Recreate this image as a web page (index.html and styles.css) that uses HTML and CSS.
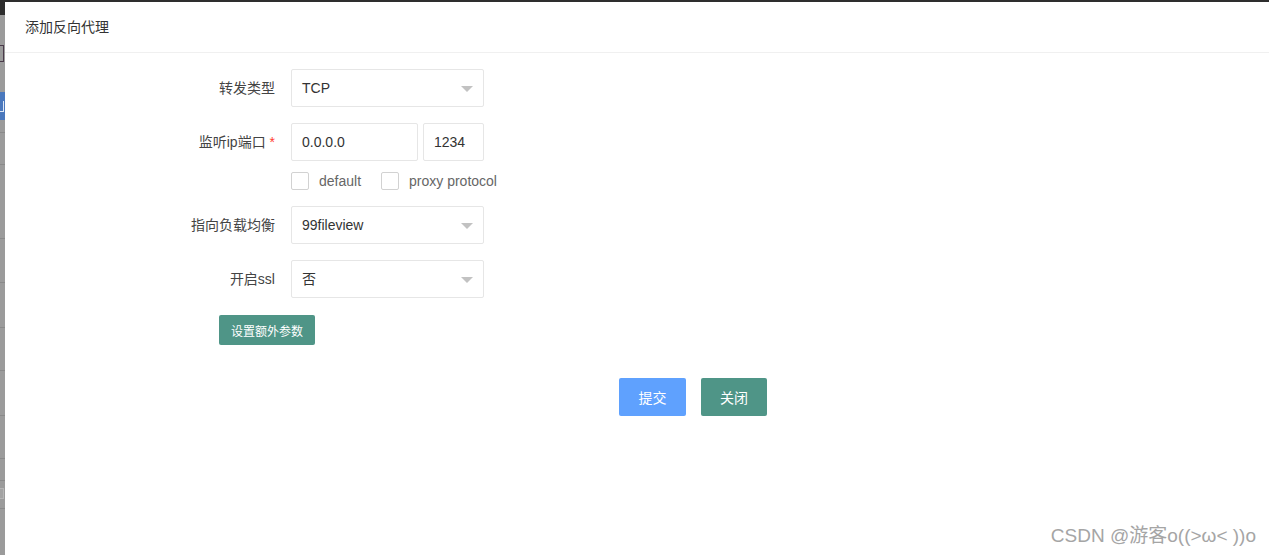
FILE: index.html
```html
<!DOCTYPE html>
<html lang="zh-CN">
<head>
<meta charset="utf-8">
<title>添加反向代理</title>
<link rel="stylesheet" href="styles.css">
</head>
<body>
<div class="topbar"></div>
<div class="main">
  <div class="backdrop">
    <div class="bd-dark"></div>
    <div class="bd-bracket"></div>
    <div class="bd-blue"></div>
    <div class="bd-line g12"></div>
    <div class="bd-line g31"></div>
    <div class="bd-line g73"></div>
    <div class="bd-line g43"></div>
    <div class="bd-line g44"></div>
    <div class="bd-line g42"></div>
    <div class="bd-line g44"></div>
    <div class="bd-line g42"></div>
    <div class="bd-line g21"></div>
    <div class="bd-box"></div>
    <div class="bd-line g9"></div>
  </div>
  <div class="modal">
    <div class="modal-header">添加反向代理</div>
    <div class="form">
      <div class="row">
        <label class="label">转发类型</label>
        <div class="select">TCP</div>
      </div>
      <div class="row row-tight">
        <label class="label">监听ip端口 <span class="req">*</span></label>
        <div class="input ip">0.0.0.0</div>
        <div class="input port">1234</div>
      </div>
      <div class="checks">
        <span class="cb"></span><span class="cb-text">default</span>
        <span class="cb"></span><span class="cb-text">proxy protocol</span>
      </div>
      <div class="row">
        <label class="label">指向负载均衡</label>
        <div class="select">99fileview</div>
      </div>
      <div class="row row-last">
        <label class="label">开启ssl</label>
        <div class="select">否</div>
      </div>
      <div class="extra">
        <button class="btn btn-sm teal">设置额外参数</button>
      </div>
      <div class="actions">
        <button class="btn blue">提交</button>
        <button class="btn teal">关闭</button>
      </div>
    </div>
    <div class="watermark">CSDN @游客o((&gt;ω&lt; ))o</div>
  </div>
</div>
</body>
</html>
```

FILE: styles.css
```css
* { box-sizing: border-box; }
html, body { margin: 0; padding: 0; }
body {
  width: 1269px;
  height: 555px;
  overflow: hidden;
  background: #9b9b9b;
  font-family: "Liberation Sans", "Noto Sans CJK SC", sans-serif;
  font-size: 14px;
  color: #333;
}
.topbar { height: 2px; background: #2e2e2e; }
.main { display: flex; height: 553px; }
.backdrop { width: 5px; flex: none; display: flex; flex-direction: column; overflow: hidden; }
.bd-dark { height: 13px; background: #2e2e2e; }
.bd-bracket { margin-top: 30px; height: 17px; width: 4px; border: 1px solid #4a3a4a; border-left: none; }
.bd-blue { margin-top: 30px; height: 28px; background: #4a78bd; position: relative; }
.bd-blue::before {
  content: "";
  position: absolute;
  left: 0;
  top: 9px;
  width: 3px;
  height: 10px;
  border-right: 1px solid #dfe8f5;
  border-bottom: 1px solid #dfe8f5;
}
.bd-line { height: 1px; background: #8a8a8a; }
.g12 { margin-top: 12px; }
.g31 { margin-top: 31px; }
.g73 { margin-top: 73px; }
.g43 { margin-top: 43px; }
.g44 { margin-top: 44px; }
.g42 { margin-top: 42px; }
.g21 { margin-top: 21px; }
.g9 { margin-top: 9px; }
.bd-box { margin-top: 7px; height: 11px; width: 4px; border: 1px solid #b5b5b5; border-left: none; background: #a3a3a3; }

.modal { flex: 1; background: #fff; position: relative; display: flex; flex-direction: column; }
.modal-header {
  height: 51px;
  line-height: 50px;
  padding-left: 20px;
  border-bottom: 1px solid #f0f0f0;
  font-size: 14px;
  color: #333;
}
.form { padding-top: 16px; display: flex; flex-direction: column; }
.row { display: flex; height: 38px; margin-bottom: 16px; }
.row-tight { margin-bottom: 11px; }
.row-last { margin-bottom: 17px; }
.label {
  width: 286px;
  padding-right: 16px;
  text-align: right;
  line-height: 38px;
  color: #444;
}
.req { color: #ff3b30; }
.select, .input {
  height: 38px;
  line-height: 36px;
  border: 1px solid #e6e6e6;
  border-radius: 2px;
  padding-left: 10px;
  color: #333;
  background: #fff;
}
.select { width: 193px; position: relative; }
.select::after {
  content: "";
  position: absolute;
  right: 10px;
  top: 16px;
  border-width: 6px;
  border-style: solid;
  border-color: #c2c2c2 transparent transparent transparent;
}
.ip { width: 127px; }
.port { width: 61px; margin-left: 5px; }
.checks { display: flex; align-items: center; height: 18px; margin-left: 286px; margin-bottom: 16px; color: #666; }
.cb { width: 18px; height: 18px; border: 1px solid #d2d2d2; border-radius: 2px; margin-right: 10px; }
.cb-text { margin-right: 20px; }
.extra { padding-left: 214px; }
.btn {
  border: none;
  border-radius: 2px;
  color: #fff;
  font-family: inherit;
  cursor: pointer;
}
.btn-sm { height: 30px; width: 96px; font-size: 12px; padding: 0; }
.teal { background: #4f9587; }
.blue { background: #5fa1fe; }
.actions { display: flex; gap: 15px; padding-left: 614px; margin-top: 33px; }
.actions .btn { height: 38px; width: 67px; font-size: 14px; padding: 0; }
.actions .teal { width: 66px; }
.watermark {
  position: absolute;
  right: 13px;
  bottom: 8px;
  font-size: 19px;
  color: #a5a5a5;
  text-shadow: 0 0 1px #fff;
}
```
